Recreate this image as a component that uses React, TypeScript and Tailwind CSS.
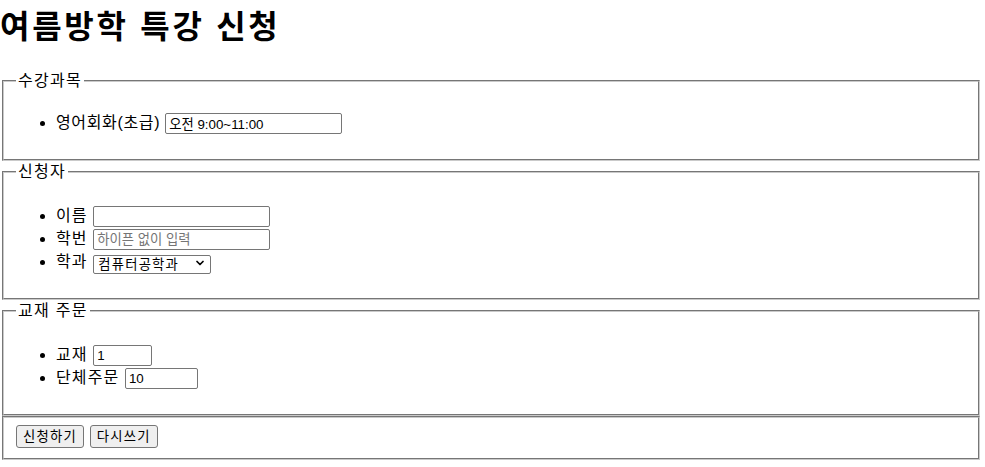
import React from "react";
import { ChevronDown } from "lucide-react";

// shared control look (Chrome default form controls)
const inputCls =
  "h-[21px] mt-px align-top border border-[#767676] rounded-[2px] bg-white px-[3px] text-[13.33px] leading-[17px] tracking-normal text-black placeholder:text-[#757575] outline-none";
const fieldsetCls =
  "ml-[2px] mr-[5px] px-[12px] pb-[10px] [border:2px_groove_#cacaca]";
const legendCls = "px-[2px] text-base leading-[21px] tracking-[0.08em]";
const buttonCls =
  "h-[23px] px-[6px] border border-[#767676] rounded-[3px] bg-[#efefef] text-[13.33px] leading-[17px] tracking-[0.09em] text-black";

const Row = ({
  label,
  track = "tracking-[0.07em]",
  children,
}: {
  label: string;
  track?: string;
  children: React.ReactNode;
}) => (
  <li className={`h-[23px] leading-[22px] ${track}`}>
    {label} {children}
  </li>
);

export default function App() {
  return (
    <div className="min-h-screen bg-white text-black font-['Liberation_Sans','Noto_Sans_CJK_KR',sans-serif]">
      <h1 className="h-[70px] pt-[9px] text-[32px] leading-[37px] font-bold tracking-[0.085em]">
        여름방학 특강 신청
      </h1>

      <form>
        {/* 수강과목 */}
        <fieldset className={fieldsetCls}>
          <legend className={legendCls}>수강과목</legend>
          <ul className="list-disc pl-10 mt-[21px] mb-[14px]">
            <Row label="영어회화(초급)" track="tracking-[0.04em]">
              <input type="text" defaultValue="오전 9:00~11:00" className={`${inputCls} w-[177px]`} />
            </Row>
          </ul>
        </fieldset>

        {/* 신청자 */}
        <fieldset className={fieldsetCls}>
          <legend className={legendCls}>신청자</legend>
          <ul className="list-disc pl-10 mt-[23px] mb-[14px]">
            <Row label="이름">
              <input type="text" className={`${inputCls} w-[177px]`} />
            </Row>
            <Row label="학번">
              <input type="text" placeholder="하이픈 없이 입력" className={`${inputCls} w-[177px]`} />
            </Row>
            <Row label="학과">
              <span className="relative inline-block align-top mt-[2px]">
                <select
                  defaultValue="cs"
                  className="appearance-none h-[19px] w-[118px] border border-[#767676] rounded-[2px] bg-white pl-[4px] text-[13.33px] leading-[17px] tracking-[0.09em] text-black outline-none"
                >
                  <option value="cs">컴퓨터공학과</option>
                  <option value="ee">전자공학과</option>
                  <option value="me">기계공학과</option>
                </select>
                <ChevronDown
                  size={12}
                  strokeWidth={3.5}
                  className="pointer-events-none absolute right-[5px] top-[4px] text-black"
                />
              </span>
            </Row>
          </ul>
        </fieldset>

        {/* 교재 주문 */}
        <fieldset className={fieldsetCls}>
          <legend className={legendCls}>교재 주문</legend>
          <ul className="list-disc pl-10 mt-[23px] mb-[14px]">
            <Row label="교재">
              <input type="text" defaultValue="1" className={`${inputCls} w-[59px]`} />
            </Row>
            <Row label="단체주문">
              <input type="text" defaultValue="10" className={`${inputCls} w-[73px]`} />
            </Row>
          </ul>
        </fieldset>

        {/* 버튼 */}
        <fieldset className={`${fieldsetCls} pt-[7px]`}>
          <div className="flex gap-[6px]">
            <button type="submit" className={buttonCls}>신청하기</button>
            <button type="reset" className={buttonCls}>다시쓰기</button>
          </div>
        </fieldset>
      </form>
    </div>
  );
}
